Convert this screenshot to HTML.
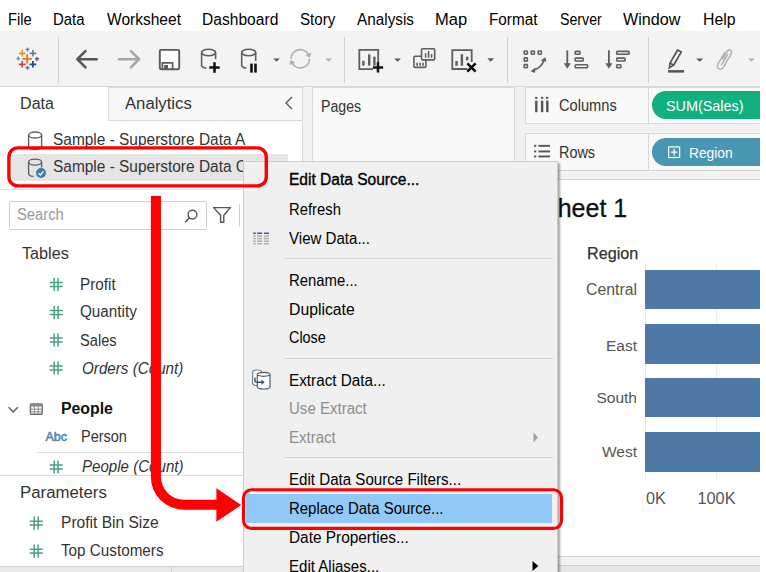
<!DOCTYPE html>
<html><head><meta charset="utf-8">
<style>
*{margin:0;padding:0;box-sizing:border-box}
html,body{width:766px;height:572px;overflow:hidden;background:#fff}
body{position:relative;font-family:"Liberation Sans",sans-serif;color:#000}
.a{position:absolute}
.t{position:absolute;white-space:nowrap;line-height:1}
.mb{font-size:15.5px;color:#000}
.dp{font-size:15.5px;color:#333}
.cm{font-size:15px;color:#000}
svg{position:absolute;overflow:visible}
</style></head><body>

<!-- menu bar -->
<div class="a" style="left:0;top:0;width:766px;height:31px;background:#fff"></div>
<div class="t mb" style="left:8.18px;top:12px;font-size:16px;transform:scaleX(0.92);transform-origin:0 0">File</div>
<div class="t mb" style="left:53.27px;top:12px;font-size:16px;transform:scaleX(0.933);transform-origin:0 0">Data</div>
<div class="t mb" style="left:106.50px;top:12px;font-size:16px;transform:scaleX(0.971);transform-origin:0 0">Worksheet</div>
<div class="t mb" style="left:202.03px;top:12px;font-size:16px;transform:scaleX(0.975);transform-origin:0 0">Dashboard</div>
<div class="t mb" style="left:300.30px;top:12px;font-size:16px;transform:scaleX(0.943);transform-origin:0 0">Story</div>
<div class="t mb" style="left:356.80px;top:12px;font-size:16px;transform:scaleX(0.957);transform-origin:0 0">Analysis</div>
<div class="t mb" style="left:434.77px;top:12px;font-size:16px;transform:scaleX(1.032);transform-origin:0 0">Map</div>
<div class="t mb" style="left:488.54px;top:12px;font-size:16px;transform:scaleX(0.956);transform-origin:0 0">Format</div>
<div class="t mb" style="left:559.50px;top:12px;font-size:16px;transform:scaleX(0.887);transform-origin:0 0">Server</div>
<div class="t mb" style="left:623.20px;top:12px;font-size:16px;transform:scaleX(1.008);transform-origin:0 0">Window</div>
<div class="t mb" style="left:702.71px;top:12px;font-size:16px;transform:scaleX(0.99);transform-origin:0 0">Help</div>

<!-- toolbar -->
<div class="a" style="left:0;top:31px;width:760px;height:56px;background:#f3f3f3;border-bottom:1px solid #d6d6d6"></div>
<div class="a" style="left:58px;top:37px;width:1px;height:46px;background:#cfcfcf"></div>
<div class="a" style="left:344px;top:37px;width:1px;height:46px;background:#cfcfcf"></div>
<div class="a" style="left:507px;top:37px;width:1px;height:46px;background:#cfcfcf"></div>
<div class="a" style="left:648px;top:37px;width:1px;height:46px;background:#cfcfcf"></div>
<svg style="left:0;top:0" width="766" height="90">
<!-- tableau logo -->
<g stroke-width="1.7" fill="none">
<path d="M27.2 54.2V63.6M22.5 58.9H31.9" stroke="#e8762c" stroke-width="1.9"/>
<path d="M22.2 50V56.6M18.9 53.3H25.5" stroke="#e8942c"/>
<path d="M32.9 50V56.6M29.6 53.3H36.2" stroke="#5b879b"/>
<path d="M22.2 61V67.6M18.9 64.3H25.5" stroke="#e03a3e"/>
<path d="M32.9 61V67.6M29.6 64.3H36.2" stroke="#1f447e"/>
<path d="M27.5 47.4V51.4M25.5 49.4H29.5" stroke="#59879b" stroke-width="1.4"/>
<path d="M18.3 56.6V60.6M16.3 58.6H20.3" stroke="#7099a6" stroke-width="1.4"/>
<path d="M37 56.9V60.9M35 58.9H39" stroke="#5a4f8c" stroke-width="1.4"/>
<path d="M27.5 65.8V69.8M25.5 67.8H29.5" stroke="#6b6eb0" stroke-width="1.4"/>
</g>
<!-- back / forward -->
<path d="M85.5 51.1L77.3 59.2L85.5 67.4M77.5 59.2H96.7" fill="none" stroke="#555" stroke-width="2.6" stroke-linecap="round" stroke-linejoin="round"/>
<path d="M130.9 51.1L139.1 59.2L130.9 67.4M138.9 59.2H119" fill="none" stroke="#a5a5a5" stroke-width="2.6" stroke-linecap="round" stroke-linejoin="round"/>
<!-- save -->
<rect x="159.8" y="49.9" width="19.4" height="19.4" rx="1.2" fill="#fcfcfc" stroke="#5a5a5a" stroke-width="1.9"/>
<path d="M162.4 69.3V62.8H172.6V69.3" fill="none" stroke="#5a5a5a" stroke-width="1.7"/>
<rect x="164.2" y="65" width="3.8" height="4.3" fill="#5a5a5a"/>
<!-- cylinder plus -->
<g fill="none" stroke="#5f5f5f" stroke-width="1.6">
<ellipse cx="208.6" cy="52.5" rx="7" ry="3.3"/>
<path d="M201.6 52.5V65.5Q201.6 67.3 206.3 68.3M215.6 52.5V59.3"/>
</g>
<path d="M214.5 62.3V72.7M209.3 67.5H219.7" stroke="#111" stroke-width="2.5"/>
<!-- cylinder pause -->
<g fill="none" stroke="#5f5f5f" stroke-width="1.6">
<ellipse cx="248.7" cy="52.5" rx="7" ry="3.3"/>
<path d="M241.7 52.5V65.5Q241.7 67.3 246.4 68.3M255.7 52.5V61"/>
</g>
<rect x="250.2" y="63.6" width="2.6" height="9" fill="#111"/>
<rect x="254.2" y="63.6" width="2.6" height="9" fill="#111"/>
<path d="M273.2 58.4H279.8L276.5 61.8Z" fill="#555"/>
<!-- refresh -->
<g fill="none" stroke="#b0b0b0" stroke-width="1.7">
<path d="M291 58.8A9.3 9.3 0 0 1 308.5 54.6"/>
<path d="M309.6 58.8A9.3 9.3 0 0 1 292.1 63"/>
</g>
<path d="M309.9 57.6L311.4 52.4L305.4 55.2Z" fill="#b0b0b0"/>
<path d="M290.7 60L289.2 65.2L295.2 62.4Z" fill="#b0b0b0"/>
<path d="M325.4 58.4H332L328.7 61.8Z" fill="#b0b0b0"/>
<!-- new worksheet -->
<path d="M373 69.2H359.3V49.9H378.2V63" fill="none" stroke="#5f5f5f" stroke-width="1.8"/>
<rect x="362.2" y="60.8" width="2.4" height="4.8" fill="#5f5f5f"/>
<rect x="368" y="54.3" width="2.4" height="11.3" fill="#5f5f5f"/>
<rect x="373.2" y="56.7" width="2.4" height="8.9" fill="#5f5f5f"/>
<path d="M378 62.3V72.5M372.9 67.4H383.1" stroke="#111" stroke-width="2.5"/>
<path d="M394.3 58.4H400.9L397.6 61.8Z" fill="#555"/>
<!-- duplicate -->
<rect x="413.9" y="56.2" width="12" height="11.2" rx="1.2" fill="#f3f3f3" stroke="#5f5f5f" stroke-width="1.6"/>
<rect x="416.3" y="62.8" width="1.6" height="3" fill="#5f5f5f"/><rect x="419.3" y="62.8" width="1.6" height="3" fill="#5f5f5f"/><rect x="422.3" y="62.8" width="1.6" height="3" fill="#5f5f5f"/>
<rect x="421.5" y="48.7" width="13.2" height="11.2" rx="1.2" fill="#f3f3f3" stroke="#5f5f5f" stroke-width="1.6"/>
<rect x="424.8" y="53.3" width="1.6" height="4.4" fill="#5f5f5f"/><rect x="427.8" y="51" width="1.6" height="6.7" fill="#5f5f5f"/><rect x="430.8" y="54" width="1.6" height="3.7" fill="#5f5f5f"/>
<!-- clear sheet -->
<path d="M467.5 69H452.3V50.1H471.7V62" fill="none" stroke="#5f5f5f" stroke-width="1.8"/>
<rect x="455.3" y="61" width="2.5" height="4.7" fill="#5f5f5f"/>
<rect x="460.7" y="54.2" width="2.4" height="11.5" fill="#5f5f5f"/>
<rect x="466" y="56.7" width="2.4" height="3.6" fill="#5f5f5f"/>
<path d="M467.3 63.4L475.6 71.7M475.6 63.4L467.3 71.7" stroke="#111" stroke-width="2.6"/>
<path d="M487.4 58.3H494L490.7 61.7Z" fill="#555"/>
<!-- swap -->
<g fill="none" stroke="#5f5f5f" stroke-width="1.6">
<rect x="524.2" y="51" width="3.2" height="3.2" rx=".6"/>
<rect x="531.2" y="51" width="3.2" height="3.2" rx=".6"/>
<rect x="538.2" y="51" width="3.2" height="3.2" rx=".6"/>
<rect x="524.2" y="57.9" width="3.2" height="3.2" rx=".6"/>
<rect x="524.2" y="64.6" width="3.2" height="3.2" rx=".6"/>
<path d="M533.5 70.2Q541.8 67.5 544 60"/>
</g>
<path d="M545.5 57.2L540.6 60.6L546.4 61.8Z" fill="#5f5f5f"/>
<path d="M530.6 71.2L535.6 67.6L534.9 73Z" fill="#5f5f5f"/>
<!-- sort asc -->
<path d="M567.3 50.3V66" stroke="#5f5f5f" stroke-width="1.8"/>
<path d="M563.8 63.3H570.8L567.3 68.8Z" fill="#5f5f5f"/>
<g fill="none" stroke="#5f5f5f" stroke-width="1.6">
<rect x="575.2" y="51.4" width="4.8" height="2.9" rx=".8"/>
<rect x="575.2" y="58.1" width="8" height="2.9" rx=".8"/>
<rect x="575.2" y="64.8" width="12.4" height="3" rx=".8"/>
</g>
<!-- sort desc -->
<path d="M608.9 50.3V66" stroke="#5f5f5f" stroke-width="1.8"/>
<path d="M605.4 63.3H612.4L608.9 68.8Z" fill="#5f5f5f"/>
<g fill="none" stroke="#5f5f5f" stroke-width="1.6">
<rect x="616.7" y="51.4" width="12.4" height="2.9" rx=".8"/>
<rect x="616.7" y="58.1" width="8.4" height="2.9" rx=".8"/>
<rect x="616.7" y="64.8" width="4.2" height="3" rx=".8"/>
</g>
<!-- highlighter -->
<path d="M677.6 50L681.2 52.1L673.6 65.2L670 63.1Z" fill="#f3f3f3" stroke="#555" stroke-width="1.7" stroke-linejoin="round"/>
<path d="M670 63.1L669.3 67.9L673.6 65.2" fill="none" stroke="#555" stroke-width="1.5"/>
<rect x="668.1" y="70.1" width="16" height="2.5" fill="#555"/>
<path d="M696.2 58.4H703.2L699.7 61.8Z" fill="#555"/>
<!-- paperclip -->
<path d="M722.8 58.8L726.6 52Q728.4 49 730.5 50.2Q732.6 51.4 730.9 54.5L723.5 67.2Q721.6 70.2 718.9 68.7Q716.2 67.2 718 64L724.6 52.8M727.5 54.5L721.5 64.8" fill="none" stroke="#b0b0b0" stroke-width="1.5" stroke-linecap="round"/>
<path d="M748.1 58.4H754.7L751.4 61.8Z" fill="#b0b0b0"/>
</svg>

<!-- main gray background -->
<div class="a" style="left:0;top:87px;width:760px;height:485px;background:#f2f2f2"></div>

<!-- data pane -->
<div class="a" style="left:0;top:87px;width:303px;height:479px;background:#fff;border-right:1px solid #d6d6d6"></div>
<div class="a" style="left:108px;top:87px;width:195px;height:34px;background:#f7f7f7;border:1px solid #d9d9d9"></div>
<div class="t dp" style="left:20.1px;top:96.3px;font-size:16px;transform:scaleX(1);transform-origin:0 0">Data</div>
<div class="t dp" style="left:125.3px;top:96.3px;font-size:16px;transform:scaleX(1.042);transform-origin:0 0">Analytics</div>
<svg style="left:284px;top:96px" width="10" height="14"><path d="M8 1 L2 7 L8 13" fill="none" stroke="#555" stroke-width="1.4"/></svg>

<!-- data source rows -->
<div class="a" style="left:12px;top:154px;width:276px;height:27px;background:#e5e5e5"></div>
<div class="t dp" style="left:53px;top:131.7px;font-size:16px;transform:scaleX(0.965);transform-origin:0 0">Sample - Superstore Data A</div>
<div class="a" style="left:53px;top:150px;width:190px;height:30px;overflow:hidden"><div class="t dp" style="left:0;top:8.5px;font-size:16px;transform:scaleX(0.965);transform-origin:0 0">Sample - Superstore Data C</div></div>
<div class="a" style="left:0;top:189px;width:303px;height:1px;background:#e3e3e3"></div>

<!-- search -->
<div class="a" style="left:9px;top:201px;width:198px;height:29px;border:1px solid #cfcfcf;border-radius:2px;background:#fff"></div>
<div class="t" style="left:17px;top:207.4px;font-size:16px;color:#9a9a9a;transform:scaleX(0.924);transform-origin:0 0">Search</div>
<div class="a" style="left:239px;top:204px;width:1px;height:23px;background:#d0d0d0"></div>

<!-- tables -->
<div class="t dp" style="left:21.7px;top:245.7px;font-size:16px;transform:scaleX(1.012);transform-origin:0 0">Tables</div>
<div class="t dp" style="left:80.3px;top:277px;font-size:16px;transform:scaleX(0.954);transform-origin:0 0">Profit</div>
<div class="t dp" style="left:79.9px;top:304.3px;font-size:16px;transform:scaleX(0.953);transform-origin:0 0">Quantity</div>
<div class="t dp" style="left:79.9px;top:332.8px;font-size:16px;transform:scaleX(0.914);transform-origin:0 0">Sales</div>
<div class="t dp" style="left:82px;top:361px;font-size:16px;font-style:italic;transform:scaleX(0.95);transform-origin:0 0">Orders (Count)</div>
<div class="t dp" style="left:60.6px;top:401.1px;font-size:16px;font-weight:bold;color:#111;transform:scaleX(0.989);transform-origin:0 0">People</div>
<div class="t" style="left:45.5px;top:430.5px;font-size:12.5px;color:#4587b0;-webkit-text-stroke:0.5px #4587b0">Abc</div>
<div class="t dp" style="left:80.7px;top:428.8px;font-size:16px;transform:scaleX(0.906);transform-origin:0 0">Person</div>
<div class="a" style="left:37px;top:452px;width:266px;height:1px;background:#e0e0e0"></div>
<div class="t dp" style="left:81.6px;top:458.9px;font-size:16px;font-style:italic;transform:scaleX(0.943);transform-origin:0 0">People (Count)</div>
<div class="a" style="left:0;top:475px;width:303px;height:1px;background:#dcdcdc"></div>
<div class="t dp" style="left:20.2px;top:484.6px;font-size:16px;transform:scaleX(1.05);transform-origin:0 0">Parameters</div>
<div class="t dp" style="left:60.9px;top:515.2px;font-size:16px;transform:scaleX(0.973);transform-origin:0 0">Profit Bin Size</div>
<div class="t dp" style="left:61px;top:543.2px;font-size:16px;transform:scaleX(0.953);transform-origin:0 0">Top Customers</div>
<div class="a" style="left:0;top:566px;width:303px;height:6px;background:#e8e8e8;border-top:1px solid #d0d0d0"></div>
<div class="a" style="left:171px;top:566px;width:1px;height:6px;background:#d0d0d0"></div>


<!-- pages panel -->
<div class="a" style="left:312px;top:87px;width:203px;height:300px;background:#f9f9f9;border:1px solid #d9d9d9"></div>
<div class="t dp" style="left:321.1px;top:99.2px;font-size:16px;transform:scaleX(0.884);transform-origin:0 0">Pages</div>

<!-- shelves -->
<div class="a" style="left:525px;top:87px;width:240px;height:37px;background:#f9f9f9;border:1px solid #d9d9d9"></div>
<div class="a" style="left:648px;top:87px;width:1px;height:37px;background:#d9d9d9"></div>
<div class="t dp" style="left:559px;top:97.8px;font-size:16px;transform:scaleX(0.914);transform-origin:0 0">Columns</div>
<div class="a" style="left:525px;top:133px;width:240px;height:38px;background:#f9f9f9;border:1px solid #d9d9d9"></div>
<div class="a" style="left:648px;top:133px;width:1px;height:38px;background:#d9d9d9"></div>
<div class="t dp" style="left:559.1px;top:144.5px;font-size:16px;transform:scaleX(0.902);transform-origin:0 0">Rows</div>
<div class="a" style="left:652px;top:91px;width:130px;height:28px;border-radius:14px;background:#10b07f"></div>
<div class="t" style="left:666px;top:99px;font-size:14.4px;color:#fff">SUM(Sales)</div>
<div class="a" style="left:652px;top:138px;width:130px;height:28px;border-radius:14px;background:#4996b2"></div>
<div class="t" style="left:688.5px;top:145.8px;font-size:14.2px;color:#fff;transform:scaleX(0.97);transform-origin:0 0">Region</div>

<!-- sheet -->
<div class="a" style="left:525px;top:170px;width:240px;height:10px;background:#f2f2f2;border-top:1px solid #d4d4d4;border-bottom:1px solid #d4d4d4"></div>
<div class="a" style="left:525px;top:180px;width:240px;height:376px;background:#fff"></div>
<div class="a" style="left:525px;top:556px;width:240px;height:16px;background:#e6e6e6;border-top:1px solid #d0d0d0"></div>
<div class="a" style="left:525px;top:557px;width:240px;height:9px;background:#f2f2f2;border-bottom:1px solid #d0d0d0"></div>
<div class="t" style="left:541px;top:196px;font-size:25px;color:#111;-webkit-text-stroke:0.3px #111">Sheet 1</div>
<div class="t" style="left:587px;top:245px;font-size:16.2px;color:#333;-webkit-text-stroke:0.25px #333">Region</div>
<div class="t" style="left:560px;top:281.8px;width:77px;text-align:right;font-size:15.8px;color:#555">Central</div>
<div class="t" style="left:560px;top:337.7px;width:77px;text-align:right;font-size:15.5px;color:#555">East</div>
<div class="t" style="left:560px;top:390px;width:77px;text-align:right;font-size:15.5px;color:#555">South</div>
<div class="t" style="left:560px;top:444.3px;width:77px;text-align:right;font-size:15.5px;color:#555">West</div>
<div class="a" style="left:645px;top:263px;width:1px;height:216px;background:#e6e6e6"></div>
<div class="a" style="left:716px;top:263px;width:1px;height:216px;background:#ececec"></div>
<div class="a" style="left:645px;top:270px;width:115px;height:39px;background:#4e79a7"></div>
<div class="a" style="left:645px;top:324px;width:115px;height:40px;background:#4e79a7"></div>
<div class="a" style="left:645px;top:378px;width:115px;height:39px;background:#4e79a7"></div>
<div class="a" style="left:645px;top:432px;width:115px;height:40px;background:#4e79a7"></div>
<div class="t" style="left:646px;top:489.8px;font-size:16.3px;color:#555">0K</div>
<div class="t" style="left:697.5px;top:489.8px;font-size:16.3px;color:#555">100K</div>


<!-- data pane icons -->
<svg style="left:0;top:0" width="766" height="572">
<g fill="none" stroke="#606060" stroke-width="1.4">
<ellipse cx="35.1" cy="135" rx="6.5" ry="3"/>
<path d="M28.6 135V146.5Q28.6 149.6 35.1 149.6Q41.6 149.6 41.6 146.5V135"/>
<ellipse cx="35.1" cy="162.1" rx="6.5" ry="3"/>
<path d="M28.6 162.1V173.3Q28.6 176.4 33.5 176.4M41.6 162.1V167.5"/>
</g>
<circle cx="41" cy="173" r="5" fill="#3b7fa8"/>
<path d="M38.6 173.2L40.4 175L43.5 171.3" fill="none" stroke="#fff" stroke-width="1.3"/>
<circle cx="192.5" cy="214.6" r="4.4" fill="none" stroke="#555" stroke-width="1.4"/>
<path d="M189.4 218L185.6 221.6" stroke="#555" stroke-width="1.6" stroke-linecap="round"/>
<path d="M213.6 207.6H230.4L223.8 215.3V222.2H220.6V215.3Z" fill="none" stroke="#555" stroke-width="1.4" stroke-linejoin="round"/>
<g stroke="#4aa37f" stroke-width="1.5">
<path id="hs" d="M54.2 277.9V291M58.1 277.9V291M49.7 282.5H62.8M49.7 286.4H62.8"/>
</g>
<g stroke="#4aa37f" stroke-width="1.5">
<path d="M54.2 305.9V319M58.1 305.9V319M49.7 310.5H62.8M49.7 314.4H62.8"/>
<path d="M54.2 333.4V346.5M58.1 333.4V346.5M49.7 338H62.8M49.7 341.9H62.8"/>
<path d="M54.2 361.4V374.5M58.1 361.4V374.5M49.7 366H62.8M49.7 369.9H62.8"/>
<path d="M54.2 460.4V473.5M58.1 460.4V473.5M49.7 465H62.8M49.7 468.9H62.8"/>
<path d="M34.2 516.6V529.7M38.1 516.6V529.7M29.7 521.2H42.8M29.7 525.1H42.8"/>
<path d="M34.2 544.6V557.7M38.1 544.6V557.7M29.7 549.2H42.8M29.7 553.1H42.8"/>
</g>
<path d="M8.6 407.3L13.2 411.9L17.8 407.3" fill="none" stroke="#666" stroke-width="1.5"/>
<rect x="30.4" y="404" width="11.8" height="10.3" rx="1" fill="#fff" stroke="#6a6a6a" stroke-width="1.4"/>
<rect x="30.4" y="404" width="11.8" height="2.6" fill="#888"/>
<path d="M30.4 409.2H42.2M30.4 411.8H42.2M34.4 406.6V414.3M38.2 406.6V414.3" stroke="#8a8a8a" stroke-width="1"/>
<!-- shelf icons -->
<g fill="#555">
<rect x="535.1" y="96.9" width="2.4" height="1.9"/><rect x="535.1" y="100.6" width="2.4" height="11.6"/>
<rect x="540.9" y="96.9" width="2.4" height="1.9"/><rect x="540.9" y="100.6" width="2.4" height="11.6"/>
<rect x="546.1" y="96.9" width="2.4" height="1.9"/><rect x="546.1" y="100.6" width="2.4" height="11.6"/>
<rect x="534.1" y="144.9" width="2.2" height="1.9"/><rect x="538.4" y="144.9" width="11.6" height="1.9"/>
<rect x="534.1" y="150.5" width="2.2" height="1.9"/><rect x="538.4" y="150.5" width="11.6" height="1.9"/>
<rect x="534.1" y="155.5" width="2.2" height="1.9"/><rect x="538.4" y="155.5" width="11.6" height="1.9"/>
</g>
<rect x="668.6" y="146.9" width="11" height="10.6" fill="none" stroke="#fff" stroke-width="1.2"/>
<path d="M674.1 149V155.4M670.9 152.2H677.3" stroke="#fff" stroke-width="1.3"/>
</svg>


<!-- right white strip -->
<div class="a" style="left:760px;top:0;width:6px;height:572px;background:#fff"></div>

<!-- context menu -->
<div class="a" style="left:243px;top:161px;width:315px;height:420px;background:#f0f0f0;border:1px solid #cdcdcd;box-shadow:2px 2px 2px rgba(0,0,0,0.35)"></div>
<div class="a" style="left:246.3px;top:493.6px;width:306.2px;height:29.4px;background:#93c9f6"></div>
<div class="t cm" style="left:288.8px;top:172.3px;font-size:16px;-webkit-text-stroke:0.35px #000;transform:scaleX(0.971);transform-origin:0 0">Edit Data Source...</div>
<div class="t cm" style="left:288.8px;top:201.7px;font-size:16px;transform:scaleX(0.926);transform-origin:0 0">Refresh</div>
<div class="t cm" style="left:288.8px;top:231.0px;font-size:16px;transform:scaleX(0.942);transform-origin:0 0">View Data...</div>
<div class="a" style="left:284px;top:258px;width:269px;height:1px;background:#d5d5d5"></div>
<div class="t cm" style="left:288.8px;top:272.8px;font-size:16px;transform:scaleX(0.93);transform-origin:0 0">Rename...</div>
<div class="t cm" style="left:288.8px;top:301.5px;font-size:16px;transform:scaleX(0.985);transform-origin:0 0">Duplicate</div>
<div class="t cm" style="left:288.8px;top:330.3px;font-size:16px;transform:scaleX(0.9);transform-origin:0 0">Close</div>
<div class="a" style="left:284px;top:358px;width:269px;height:1px;background:#d5d5d5"></div>
<div class="t cm" style="left:288.8px;top:372.9px;font-size:16px;transform:scaleX(0.954);transform-origin:0 0">Extract Data...</div>
<div class="t cm" style="left:288.8px;top:401.1px;font-size:16px;color:#8d8d8d;transform:scaleX(0.94);transform-origin:0 0">Use Extract</div>
<div class="t cm" style="left:288.8px;top:430.4px;font-size:16px;color:#8d8d8d;transform:scaleX(0.94);transform-origin:0 0">Extract</div>
<div class="a" style="left:284px;top:457px;width:269px;height:1px;background:#d5d5d5"></div>
<div class="t cm" style="left:288.8px;top:471.9px;font-size:16px;transform:scaleX(0.944);transform-origin:0 0">Edit Data Source Filters...</div>
<div class="t cm" style="left:288.8px;top:500.9px;font-size:16px;transform:scaleX(0.934);transform-origin:0 0">Replace Data Source...</div>
<div class="t cm" style="left:288.8px;top:529.9px;font-size:16px;transform:scaleX(0.962);transform-origin:0 0">Date Properties...</div>
<div class="t cm" style="left:288.8px;top:558.8px;font-size:16px;transform:scaleX(0.94);transform-origin:0 0">Edit Aliases...</div>


<svg style="left:0;top:0" width="766" height="572">
<g fill="#a9a9a9">
<rect x="253.2" y="235.3" width="2.6" height="1.4"/><rect x="257.1" y="235.3" width="5" height="1.4"/><rect x="263.9" y="235.3" width="5" height="1.4"/>
<rect x="253.2" y="237.9" width="2.6" height="1.4"/><rect x="257.1" y="237.9" width="5" height="1.4"/><rect x="263.9" y="237.9" width="5" height="1.4"/>
<rect x="253.2" y="240.5" width="2.6" height="1.4"/><rect x="257.1" y="240.5" width="5" height="1.4"/><rect x="263.9" y="240.5" width="5" height="1.4"/>
<rect x="253.2" y="243.1" width="2.6" height="1.4"/><rect x="257.1" y="243.1" width="5" height="1.4"/><rect x="263.9" y="243.1" width="5" height="1.4"/>
</g>
<g fill="#3a5a8a">
<rect x="253.2" y="232.5" width="2.6" height="1.5"/><rect x="257.1" y="232.5" width="5" height="1.5"/><rect x="263.9" y="232.5" width="5" height="1.5"/>
</g>
<path d="M257 385.5Q252.6 385.5 252.6 383V372.2Q252.6 370 257 370Q261.5 370 261.5 372" fill="#fff" stroke="#6d7a87" stroke-width="1.1"/>
<path d="M257.3 386.8V374.5Q257.3 372.4 263.7 372.4Q270 372.4 270 374.5V386.8Q270 389 263.7 389Q257.3 389 257.3 386.8Z" fill="#fff" stroke="#4b5d70" stroke-width="1.2"/>
<path d="M257.5 375.3Q263.7 377.3 270 375.3" fill="none" stroke="#4b5d70" stroke-width="1.2"/>
<path d="M255 377.8V381Q255 382.2 257 382.2H262" fill="none" stroke="#2f4f6f" stroke-width="1.4"/>
<path d="M261.5 379.6L264.6 382.2L261.5 384.8Z" fill="#2f4f6f"/>
<path d="M533.5 432.5L538 437.5L533.5 442.5Z" fill="#a0a0a0"/>
<path d="M532.5 561L538.3 566L532.5 571Z" fill="#000"/>
</svg>

<!-- red annotations -->
<svg style="left:0;top:0" width="766" height="572">
<rect x="8.9" y="147.9" width="257.4" height="38" rx="9" fill="none" stroke="#f00" stroke-width="3.4"/>
<path d="M155.9 196 V476.7 A28 28 0 0 0 183.9 504.7 H217" fill="none" stroke="#f00" stroke-width="10.1"/>
<path d="M216.4 488.3 L241.2 505.1 L216.4 521.8 Z" fill="#f00"/>
<rect x="243.5" y="489.8" width="318" height="38.6" rx="8" fill="none" stroke="#f00" stroke-width="3.1"/>
</svg>

</body></html>
